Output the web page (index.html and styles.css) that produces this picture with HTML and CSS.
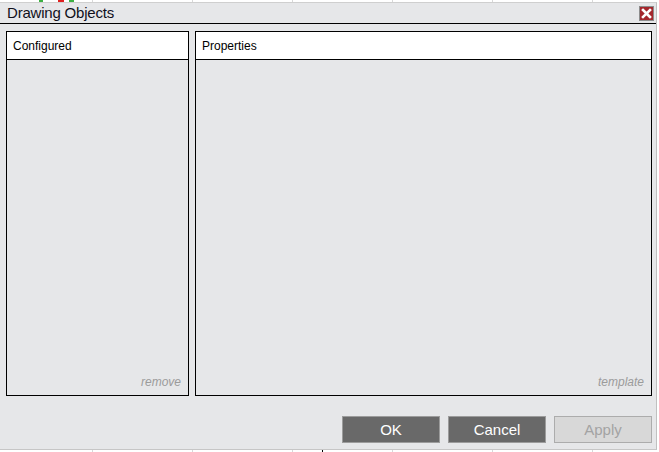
FILE: index.html
```html
<!DOCTYPE html>
<html>
<head>
<meta charset="utf-8">
<link rel="stylesheet" href="styles.css">
</head>
<body>
<div class="page-strip">
  <span class="mark mark-g1"></span>
  <span class="mark mark-r"></span>
  <span class="mark mark-g2"></span>
</div>
<div class="dialog">
  <div class="titlebar">
    <span class="title">Drawing Objects</span>
    <span class="close" aria-label="Close">
      <svg width="15" height="15" viewBox="0 0 15 15">
        <rect x="0.5" y="0.5" width="14" height="14" fill="#a4262c" stroke="#8c8c8c"/>
        <path d="M4 4 L11 11 M11 4 L4 11" stroke="#fff" stroke-width="2.6" stroke-linecap="square"/>
      </svg>
    </span>
  </div>
  <div class="main">
    <div class="panel panel-left">
      <div class="panel-head">Configured</div>
      <div class="panel-body"><span class="panel-link">remove</span></div>
    </div>
    <div class="panel panel-right">
      <div class="panel-head">Properties</div>
      <div class="panel-body"><span class="panel-link">template</span></div>
    </div>
  </div>
  <div class="actions">
    <button class="btn">OK</button>
    <button class="btn">Cancel</button>
    <button class="btn btn-disabled">Apply</button>
  </div>
</div>
<div class="tick"></div>
</body>
</html>
```

FILE: styles.css
```css
html, body {
  margin: 0;
  padding: 0;
}
body {
  width: 659px;
  height: 452px;
  overflow: hidden;
  background-color: #fff;
  background-image: repeating-linear-gradient(to right, transparent 0, transparent 92px, #d8d8d8 92px, #d8d8d8 93px, transparent 93px, transparent 100px);
  font-family: "Liberation Sans", Arial, sans-serif;
  position: relative;
}
.page-strip {
  height: 2px;
  position: relative;
}
.mark {
  position: absolute;
  top: 0;
  height: 2px;
}
.mark-g1 { left: 39px; width: 4px; background: #3cb043; }
.mark-r { left: 58px; width: 6px; background: #e02020; }
.mark-g2 { left: 69px; width: 5px; background: #3cb043; }

.dialog {
  width: 656px;
  height: 446px;
  background: #e6e7e9;
  border-top: 1px solid #cfcfcf;
  border-right: 1px solid #c0c0c0;
  border-bottom: 1px solid #c6c6c6;
  display: flex;
  flex-direction: column;
}
.titlebar {
  height: 20px;
  border-bottom: 1px solid #000;
  display: flex;
  align-items: center;
  justify-content: space-between;
  padding: 0 2px 0 7px;
}
.title {
  font-size: 15px;
  letter-spacing: -0.2px;
  color: #10101c;
  line-height: 20px;
}
.close {
  display: flex;
  width: 15px;
  height: 15px;
  margin-top: 1px;
}
.main {
  display: flex;
  gap: 6px;
  padding: 7px 4px 0 6px;
  height: 365px;
}
.panel {
  border: 1px solid #000;
  display: flex;
  flex-direction: column;
  box-sizing: border-box;
  height: 365px;
}
.panel-left { width: 183px; }
.panel-right { flex: 1; }
.panel-head {
  height: 27px;
  background: #fff;
  border-bottom: 1px solid #000;
  font-size: 12px;
  line-height: 28px;
  padding-left: 6px;
  color: #000;
}
.panel-body {
  flex: 1;
  display: flex;
  align-items: flex-end;
  justify-content: flex-end;
  padding: 0 7px 6px 0;
}
.panel-link {
  font-size: 12px;
  font-style: italic;
  color: #9b9b9b;
}
.actions {
  display: flex;
  justify-content: flex-end;
  gap: 8px;
  margin-top: 20px;
  padding-right: 4px;
}
.btn {
  width: 98px;
  height: 27px;
  margin: 0;
  padding: 0;
  background: #696969;
  border: 1px solid #9c9c9c;
  color: #fff;
  font-family: "Liberation Sans", Arial, sans-serif;
  font-size: 15px;
}
.btn-disabled {
  background: #d8d8d8;
  border-color: #acacac;
  color: #a3a3a3;
}
.tick {
  position: absolute;
  left: 322px;
  top: 450px;
  width: 1px;
  height: 2px;
  background: #000;
}
```
